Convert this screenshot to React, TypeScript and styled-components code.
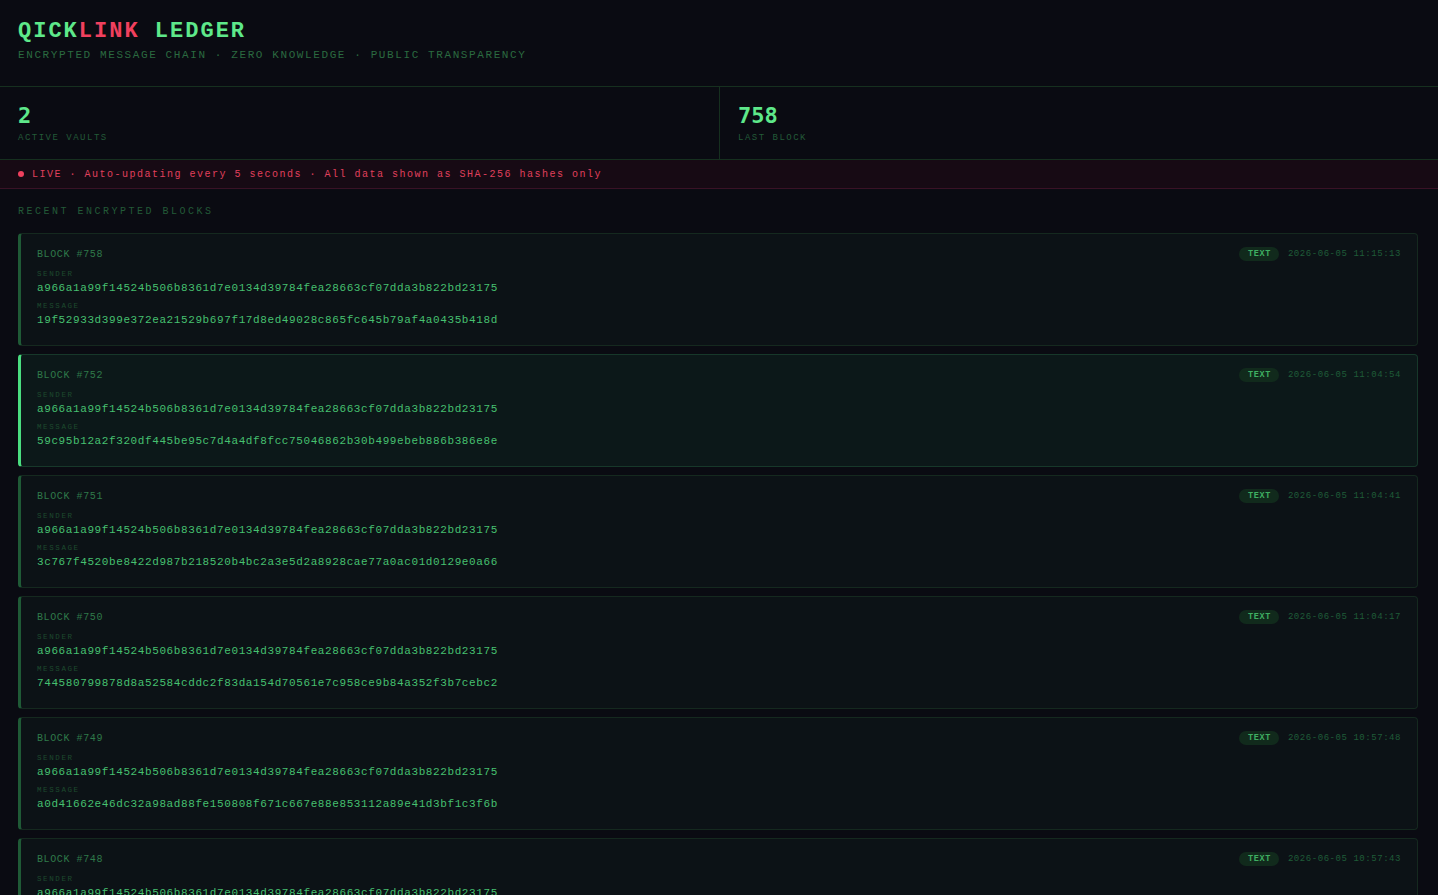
import styled, { createGlobalStyle } from "styled-components"

const GlobalStyle = createGlobalStyle`
  html, body {
    margin: 0;
    padding: 0;
    background: #0a0b12;
  }
  body {
    font-family: "Liberation Mono", "Courier New", monospace;
    color: #4ade80;
  }
`

const Page = styled.div`
  min-height: 100vh;
  background: #0a0b12;
`

const Header = styled.header`
  padding: 19px 18px 24px;
  border-bottom: 1px solid #16301f;
`

const Title = styled.h1`
  margin: 0;
  font-size: 22px;
  line-height: 26px;
  font-weight: 700;
  letter-spacing: 2px;
  color: #5ee88a;

  span {
    color: #f0405e;
  }
`

const Subtitle = styled.div`
  margin-top: 3px;
  font-size: 11px;
  line-height: 14px;
  letter-spacing: 1.6px;
  color: #2a6a40;
`

const Stats = styled.section`
  display: grid;
  grid-template-columns: 1fr 1fr;
  border-bottom: 1px solid #16301f;
`

const Stat = styled.div`
  padding: 16px 20px 15px 18px;
  & + & {
    border-left: 1px solid #16301f;
  }
`

const StatValue = styled.div`
  font-family: "DejaVu Sans Mono", monospace;
  font-size: 22px;
  line-height: 26px;
  font-weight: 700;
  color: #5ee88a;
`

const StatLabel = styled.div`
  margin-top: 3px;
  font-size: 9px;
  line-height: 12px;
  letter-spacing: 1.5px;
  color: #235a38;
`

const LiveBar = styled.div`
  display: flex;
  align-items: center;
  height: 28px;
  padding: 0 18px;
  background: #170a14;
  border-bottom: 1px solid #3a1226;
  font-size: 10px;
  letter-spacing: 1.5px;
  color: #e0405c;
  white-space: pre;
`

const Dot = styled.span`
  display: inline-block;
  width: 6px;
  height: 6px;
  border-radius: 50%;
  background: #f0405e;
  margin-right: 8px;
`

const Section = styled.section`
  padding: 17px 20px 0 18px;
`

const SectionTitle = styled.div`
  font-size: 10px;
  line-height: 12px;
  letter-spacing: 2.5px;
  color: #235a38;
  margin-bottom: 15px;
`

const List = styled.div`
  display: flex;
  flex-direction: column;
  gap: 8px;
`

const Card = styled.article<{ $active?: boolean }>`
  display: flex;
  justify-content: space-between;
  align-items: flex-start;
  padding: 14px 16px 18px 16px;
  background: ${p => (p.$active ? "#0c1819" : "#0c1216")};
  border: 1px solid ${p => (p.$active ? "#17382a" : "#15291f")};
  border-left: 3px solid ${p => (p.$active ? "#4ade80" : "#1f5a36")};
  border-radius: 4px;
`

const CardBody = styled.div`
  display: flex;
  flex-direction: column;
`

const BlockId = styled.div`
  font-size: 10px;
  line-height: 13px;
  letter-spacing: 0.6px;
  color: #2f7a4a;
  margin-bottom: 9px;
`

const FieldLabel = styled.div`
  font-size: 7.5px;
  line-height: 9px;
  letter-spacing: 1.6px;
  color: #1d4a2e;
`

const Hash = styled.div`
  font-size: 11px;
  line-height: 14px;
  letter-spacing: 0.6px;
  color: #46c070;
  margin: 2px 0 7px;

  &:last-child {
    margin-bottom: 0;
  }
`

const Meta = styled.div`
  display: flex;
  align-items: center;
  gap: 9px;
  margin-top: -1px;
`

const Badge = styled.span`
  padding: 2px 8px 2px 9px;
  border-radius: 8px;
  background: #112a1c;
  font-size: 8.5px;
  line-height: 10px;
  font-weight: 700;
  letter-spacing: 0.6px;
  color: #3fae62;
`

const Time = styled.span`
  font-size: 9px;
  letter-spacing: 0.55px;
  color: #1f5c38;
`

type Block = {
  id: number
  time: string
  sender: string
  message: string
}

const SENDER = "a966a1a99f14524b506b8361d7e0134d39784fea28663cf07dda3b822bd23175"

const blocks: Block[] = [
  { id: 758, time: "2026-06-05 11:15:13", sender: SENDER, message: "19f52933d399e372ea21529b697f17d8ed49028c865fc645b79af4a0435b418d" },
  { id: 752, time: "2026-06-05 11:04:54", sender: SENDER, message: "59c95b12a2f320df445be95c7d4a4df8fcc75046862b30b499ebeb886b386e8e" },
  { id: 751, time: "2026-06-05 11:04:41", sender: SENDER, message: "3c767f4520be8422d987b218520b4bc2a3e5d2a8928cae77a0ac01d0129e0a66" },
  { id: 750, time: "2026-06-05 11:04:17", sender: SENDER, message: "744580799878d8a52584cddc2f83da154d70561e7c958ce9b84a352f3b7cebc2" },
  { id: 749, time: "2026-06-05 10:57:48", sender: SENDER, message: "a0d41662e46dc32a98ad88fe150808f671c667e88e853112a89e41d3bf1c3f6b" },
  { id: 748, time: "2026-06-05 10:57:43", sender: SENDER, message: "5b1e0c2f7a9d3e86c4b21f0a7d5e93c6b8a1f4e2d7c09b3a65e8f1d24c7a9b0e" },
]

export default function App() {
  return (
    <Page>
      <GlobalStyle />
      <Header>
        <Title>
          QICK<span>LINK</span> LEDGER
        </Title>
        <Subtitle>ENCRYPTED MESSAGE CHAIN · ZERO KNOWLEDGE · PUBLIC TRANSPARENCY</Subtitle>
      </Header>

      <Stats>
        <Stat>
          <StatValue>2</StatValue>
          <StatLabel>ACTIVE VAULTS</StatLabel>
        </Stat>
        <Stat>
          <StatValue>758</StatValue>
          <StatLabel>LAST BLOCK</StatLabel>
        </Stat>
      </Stats>

      <LiveBar>
        <Dot />
        LIVE · Auto-updating every 5 seconds · All data shown as SHA-256 hashes only
      </LiveBar>

      <Section>
        <SectionTitle>RECENT ENCRYPTED BLOCKS</SectionTitle>
        <List>
          {blocks.map((b, i) => (
            <Card key={b.id} $active={i === 1}>
              <CardBody>
                <BlockId>BLOCK #{b.id}</BlockId>
                <FieldLabel>SENDER</FieldLabel>
                <Hash>{b.sender}</Hash>
                <FieldLabel>MESSAGE</FieldLabel>
                <Hash>{b.message}</Hash>
              </CardBody>
              <Meta>
                <Badge>TEXT</Badge>
                <Time>{b.time}</Time>
              </Meta>
            </Card>
          ))}
        </List>
      </Section>
    </Page>
  )
}
